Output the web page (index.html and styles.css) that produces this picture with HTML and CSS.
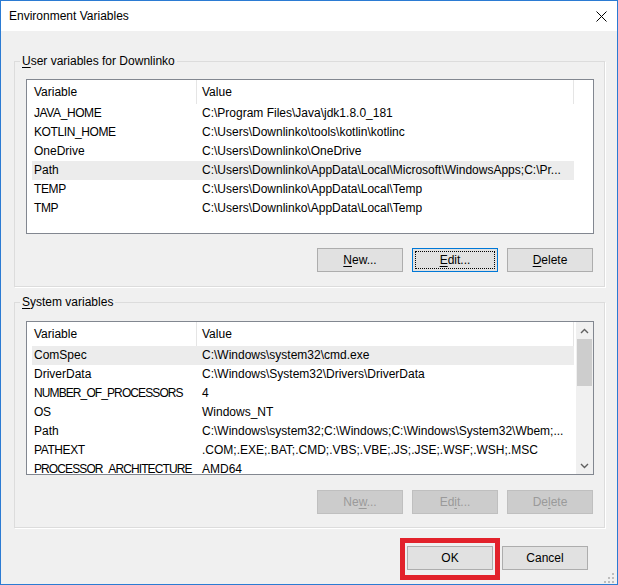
FILE: index.html
```html
<!DOCTYPE html>
<html lang="en">
<head>
<meta charset="utf-8">
<title>Environment Variables</title>
<link rel="stylesheet" href="styles.css">
</head>
<body>
<div class="window">
  <div class="titlebar">
    <span class="title">Environment Variables</span>
    <svg class="close" width="11" height="11" viewBox="0 0 11 11"><path d="M0.5 0.5 L10.5 10.5 M10.5 0.5 L0.5 10.5" stroke="#000" stroke-width="1" fill="none"/></svg>
  </div>
  <div class="content">
    <div class="group group-user">
      <div class="group-label"><u>U</u>ser variables for Downlinko</div>
      <div class="listview lv-user">
        <div class="lv-main">
          <div class="lv-header">
            <div class="hcell hc-var">Variable</div>
            <div class="hcell hc-val">Value</div>
            <div class="hcell hc-fill"></div>
          </div>
          <div class="lv-rows">
            <div class="row"><span class="c-var caps">JAVA_HOME</span><span class="c-val">C:\Program Files\Java\jdk1.8.0_181</span></div>
            <div class="row"><span class="c-var caps">KOTLIN_HOME</span><span class="c-val">C:\Users\Downlinko\tools\kotlin\kotlinc</span></div>
            <div class="row"><span class="c-var">OneDrive</span><span class="c-val">C:\Users\Downlinko\OneDrive</span></div>
            <div class="row sel"><span class="c-var">Path</span><span class="c-val">C:\Users\Downlinko\AppData\Local\Microsoft\WindowsApps;C:\Pr...</span></div>
            <div class="row"><span class="c-var caps">TEMP</span><span class="c-val">C:\Users\Downlinko\AppData\Local\Temp</span></div>
            <div class="row"><span class="c-var caps">TMP</span><span class="c-val">C:\Users\Downlinko\AppData\Local\Temp</span></div>
          </div>
        </div>
      </div>
      <div class="btn-row">
        <button class="btn"><u>N</u>ew...</button>
        <button class="btn focused"><u>E</u>dit...</button>
        <button class="btn"><u>D</u>elete</button>
      </div>
    </div>

    <div class="group group-sys">
      <div class="group-label"><u>S</u>ystem variables</div>
      <div class="listview lv-sys">
        <div class="lv-main">
          <div class="lv-header">
            <div class="hcell hc-var">Variable</div>
            <div class="hcell hc-val">Value</div>
            <div class="hcell hc-fill"></div>
          </div>
          <div class="lv-rows">
            <div class="row sel"><span class="c-var">ComSpec</span><span class="c-val">C:\Windows\system32\cmd.exe</span></div>
            <div class="row"><span class="c-var">DriverData</span><span class="c-val">C:\Windows\System32\Drivers\DriverData</span></div>
            <div class="row"><span class="c-var caps tight">NUMBER_OF_PROCESSORS</span><span class="c-val">4</span></div>
            <div class="row"><span class="c-var caps">OS</span><span class="c-val">Windows_NT</span></div>
            <div class="row"><span class="c-var">Path</span><span class="c-val">C:\Windows\system32;C:\Windows;C:\Windows\System32\Wbem;...</span></div>
            <div class="row"><span class="c-var caps">PATHEXT</span><span class="c-val">.COM;.EXE;.BAT;.CMD;.VBS;.VBE;.JS;.JSE;.WSF;.WSH;.MSC</span></div>
            <div class="row"><span class="c-var caps tight">PROCESSOR_ARCHITECTURE</span><span class="c-val">AMD64</span></div>
          </div>
        </div>
        <div class="scrollbar">
          <div class="sb-btn"><svg width="9" height="6" viewBox="0 0 9 6"><path d="M1 5 L4.5 1.5 L8 5" fill="none" stroke="#606060" stroke-width="1.4"/></svg></div>
          <div class="sb-thumb"></div>
          <div class="sb-track"></div>
          <div class="sb-btn"><svg width="9" height="6" viewBox="0 0 9 6"><path d="M1 1 L4.5 4.5 L8 1" fill="none" stroke="#606060" stroke-width="1.4"/></svg></div>
        </div>
      </div>
      <div class="btn-row">
        <button class="btn" disabled>Ne<u>w</u>...</button>
        <button class="btn" disabled>Ed<u>i</u>t...</button>
        <button class="btn" disabled>De<u>l</u>ete</button>
      </div>
    </div>

    <div class="footer">
      <button class="btn ok">OK</button>
      <button class="btn">Cancel</button>
    </div>
  </div>
  <svg class="grip" width="10" height="10" viewBox="0 0 10 10">
    <rect x="8" y="0" width="2" height="2" fill="#bdbdbd"/>
    <rect x="8" y="4" width="2" height="2" fill="#bdbdbd"/>
    <rect x="4" y="4" width="2" height="2" fill="#bdbdbd"/>
    <rect x="8" y="8" width="2" height="2" fill="#bdbdbd"/>
    <rect x="4" y="8" width="2" height="2" fill="#bdbdbd"/>
    <rect x="0" y="8" width="2" height="2" fill="#bdbdbd"/>
  </svg>
</div>
</body>
</html>
```

FILE: styles.css
```css
* { box-sizing: border-box; }
html, body { margin: 0; padding: 0; }
body {
  background: #f0f0f0;
  font-family: "Liberation Sans", Arial, sans-serif;
  font-size: 12px;
  color: #000;
}
u { text-decoration: underline; text-underline-offset: 2px; }

.window {
  position: relative;
  width: 618px;
  height: 585px;
  border: 1px solid #2b7bd3;
  background: #f0f0f0;
  display: flex;
  flex-direction: column;
  overflow: hidden;
}

.titlebar {
  flex: none;
  height: 30px;
  background: #fff;
  display: flex;
  align-items: center;
  justify-content: space-between;
  padding-left: 8px;
}
.title { line-height: 30px; }
.close { margin-right: 10px; display: block; }

.content { padding: 30px 12px 0 13px; }

.group {
  border: 1px solid #dcdcdc;
  box-shadow: 1px 1px 0 #fff;
}
.group-user { padding-bottom: 14px; }
.group-sys { margin-top: 15px; padding-bottom: 13px; }

.group-label {
  width: max-content;
  margin: -9px 0 0 5px;
  padding: 0 2px;
  line-height: 16px;
  background: #f0f0f0;
}

.listview {
  border: 1px solid #828790;
  background: #fff;
  display: flex;
  overflow: hidden;
}
.lv-user { margin: 10px 10px 0 11px; height: 155px; }
.lv-sys { margin: 11px 10px 0 11px; height: 154px; }

.lv-main { flex: 1; min-width: 0; overflow: hidden; }

.lv-header { display: flex; height: 24px; }
.hcell { display: flex; align-items: center; white-space: nowrap; }
.hc-var { flex: none; width: 170px; padding-left: 7px; border-right: 1px solid #e5e5e5; }
.hc-val { flex: none; width: 377px; padding-left: 5px; border-right: 1px solid #e5e5e5; }
.hc-fill { flex: 1; }

.lv-rows { padding-left: 5px; }
.row {
  display: flex;
  width: 542px;
  height: 19px;
  line-height: 19px;
  white-space: nowrap;
  overflow: hidden;
}
.row.sel { background: #ececec; }
.c-var { flex: none; width: 165px; padding-left: 2px; overflow: hidden; }
.c-var.caps { letter-spacing: -0.4px; }
.c-var.tight { letter-spacing: -0.9px; }
.c-val { padding-left: 5px; }

.scrollbar {
  flex: none;
  width: 17px;
  background: #f0f0f0;
  display: flex;
  flex-direction: column;
}
.sb-btn {
  flex: none;
  height: 17px;
  display: flex;
  align-items: center;
  justify-content: center;
}
.sb-btn svg { display: block; }
.sb-thumb { flex: none; height: 47px; margin: 0 1px; background: #cdcdcd; }
.sb-track { flex: 1; }

.btn-row {
  display: flex;
  justify-content: flex-end;
  gap: 9px;
  margin: 14px 11px 0 0;
}
.group-sys .btn-row { margin-top: 15px; }

.btn {
  width: 86px;
  height: 24px;
  padding: 0;
  border: 1px solid #adadad;
  background: #e1e1e1;
  font: inherit;
  color: #000;
}
.btn.focused {
  border-color: #0078d7;
  outline: 1px dotted #000;
  outline-offset: -4px;
}
.btn:disabled {
  background: #cccccc;
  border-color: #bfbfbf;
  color: #9a9a9a;
}

.footer {
  display: flex;
  justify-content: flex-end;
  gap: 9px;
  margin: 18px 17px 0 0;
}
.ok { position: relative; }
.ok::after {
  content: "";
  position: absolute;
  top: -9px;
  left: -8px;
  right: -8px;
  bottom: -11px;
  border: 5px solid #e2222b;
}

.grip { position: absolute; right: 3px; bottom: 1px; display: block; }
```
